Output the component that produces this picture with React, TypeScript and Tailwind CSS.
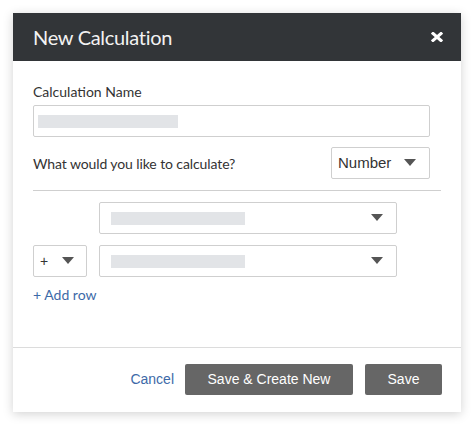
const Caret = () => (
  <svg width="12" height="8" viewBox="0 0 12 8" className="shrink-0">
    <path d="M0 0 L12 0 L6 7 Z" fill="#555" />
  </svg>
);

const SelectBox = ({ width }: { width: string }) => (
  <div className={`${width} h-[32px] border border-[#cfcfcf] rounded-[2px] bg-white flex items-center justify-between pl-[11px] pr-[13px]`}>
    <div className="w-[134px] h-[13px] bg-[#e2e4e7]" />
    <Caret />
  </div>
);

export default function App() {
  return (
    <div className="min-h-screen bg-white p-[13px] font-['Lato','Open_Sans',sans-serif]">
      <div className="w-[448px] bg-white shadow-[0_2px_10px_rgba(0,0,0,0.18)]">
        {/* Header */}
        <div className="h-[48px] bg-[#323538] flex items-center justify-between pl-[20px] pr-[18px]">
          <h1 className="text-[20px] text-[#f2f2f2] tracking-[-0.3px]">New Calculation</h1>
          <svg width="12" height="10" viewBox="0 0 12 10">
            <path d="M2 1.5 L10 8.5 M10 1.5 L2 8.5" stroke="#fff" strokeWidth="3" strokeLinecap="square" />
          </svg>
        </div>

        {/* Body */}
        <div className="px-[20px] pt-[21px] pb-[42px] border-b border-[#dcdcdc]">
          <label className="block text-[14px] leading-[20px] text-[#333] mb-[3px]">Calculation Name</label>
          <div className="w-[397px] h-[32px] border border-[#cfcfcf] rounded-[2px] flex items-center px-[4px]">
            <div className="w-[140px] h-[13px] bg-[#e2e4e7]" />
          </div>

          <div className="w-[397px] flex items-center justify-between mt-[10px]">
            <span className="text-[14px] text-[#333] tracking-[-0.1px]">What would you like to calculate?</span>
            <div className="w-[99px] h-[32px] border border-[#cfcfcf] rounded-[2px] flex items-center justify-between pl-[6px] pr-[13px]">
              <span className="text-[15px] text-[#333] font-['Liberation_Sans',Arial,sans-serif]">Number</span>
              <Caret />
            </div>
          </div>

          <div className="h-px bg-[#cfcfcf] mt-[11px] mb-[11px]" />

          <div className="flex flex-col gap-[11px]">
            <div className="flex gap-[12px]">
              <div className="w-[54px]" />
              <SelectBox width="w-[298px]" />
            </div>
            <div className="flex gap-[12px]">
              <div className="w-[54px] h-[32px] border border-[#cfcfcf] rounded-[2px] flex items-center justify-between pl-[6px] pr-[12px]">
                <span className="text-[14px] text-[#333] font-['Liberation_Sans',Arial,sans-serif]">+</span>
                <Caret />
              </div>
              <SelectBox width="w-[298px]" />
            </div>
          </div>

          <div className="mt-[8px] text-[14px] leading-[20px] text-[#3d6aa8]">+ Add row</div>
        </div>

        {/* Footer */}
        <div className="flex items-center justify-end gap-[11px] pt-[16px] pb-[17px] pr-[19px] font-['Liberation_Sans',Arial,sans-serif]">
          <span className="text-[14px] text-[#3d6aa8]">Cancel</span>
          <button className="w-[168px] h-[31px] bg-[#666666] rounded-[2px] text-white text-[14px]">Save &amp; Create New</button>
          <button className="w-[77px] h-[31px] bg-[#666666] rounded-[2px] text-white text-[14px] ml-px">Save</button>
        </div>
      </div>
    </div>
  );
}
